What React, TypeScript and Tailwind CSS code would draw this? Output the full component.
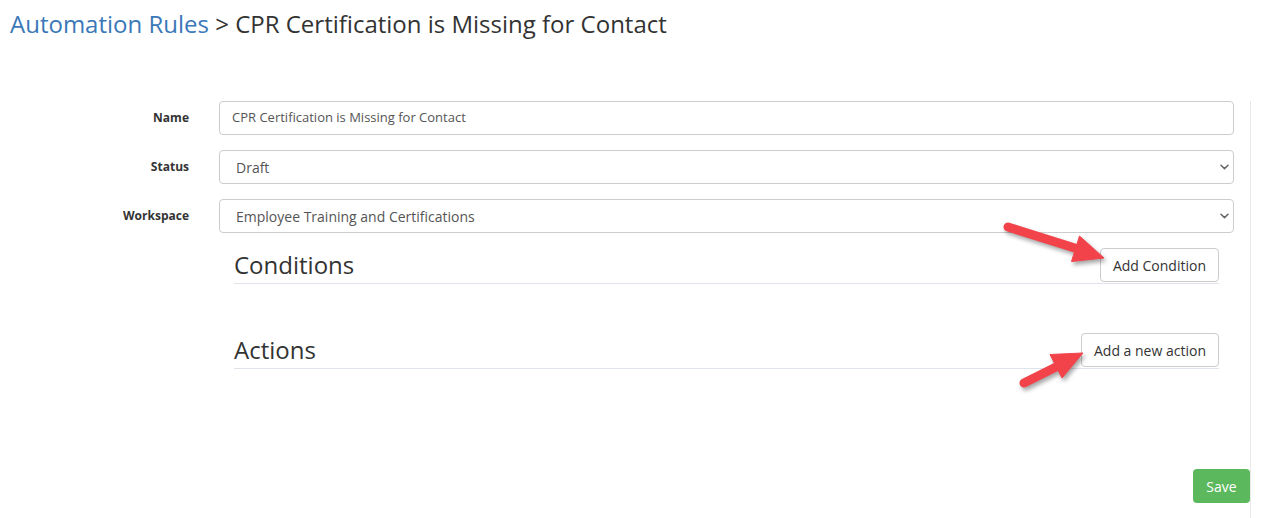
import React from "react";

function Chevron() {
  return (
    <svg width="9" height="6" viewBox="0 0 9 6" className="shrink-0">
      <path d="M1 1.2 L4.5 4.6 L8 1.2" fill="none" stroke="#666" strokeWidth="1.5" strokeLinecap="round" strokeLinejoin="round" />
    </svg>
  );
}

function Row({ label, children }: { label: string; children: React.ReactNode }) {
  return (
    <div className="flex items-center mb-[15px]">
      <div className="w-[219px] pr-[30px] text-right text-[12px] font-bold text-[#333]">{label}</div>
      <div className="w-[1015px]">{children}</div>
    </div>
  );
}

function Select({ value }: { value: string }) {
  return (
    <div className="h-[34px] border border-[#ccc] rounded-[4px] flex items-center justify-between pl-[16px] pr-[4px] text-[14px] text-[#555] bg-white">
      <span>{value}</span>
      <Chevron />
    </div>
  );
}

function Section({ title, button }: { title: string; button: string }) {
  return (
    <div className="ml-[234px] w-[985px] flex items-end justify-between border-b border-[#dfe3ea]">
      <h3 className="text-[24px] leading-[34px] mb-px text-[#333]">{title}</h3>
      <button className="h-[34px] mb-px px-[12px] border border-[#ccc] rounded-[4px] bg-white text-[14px] text-[#333]">
        {button}
      </button>
    </div>
  );
}

export default function App() {
  return (
    <div className="relative w-[1281px] h-[518px] bg-white overflow-hidden" style={{ fontFamily: '"Open Sans", sans-serif' }}>
      <h1 className="pt-[11px] pl-[10px] text-[24px] leading-[26px] text-[#333]">
        <span className="text-[#3a78b8]">Automation Rules</span> &gt; CPR Certification is Missing for Contact
      </h1>
      <div className="mt-[64px] w-[1251px] h-[417px] border-r border-[#e8e8e8] flex flex-col">
        <Row label="Name">
          <div className="h-[34px] border border-[#ccc] rounded-[4px] flex items-center pl-[12px] text-[13px] text-[#555]">
            CPR Certification is Missing for Contact
          </div>
        </Row>
        <Row label="Status">
          <Select value="Draft" />
        </Row>
        <Row label="Workspace">
          <Select value="Employee Training and Certifications" />
        </Row>
        <Section title="Conditions" button="Add Condition" />
        <div className="h-[49px]" />
        <Section title="Actions" button="Add a new action" />
        <div className="flex justify-end mt-[100px]">
          <button className="h-[34px] w-[57px] rounded-[4px] bg-[#5cb85c] text-white text-[14px]">Save</button>
        </div>
      </div>
      <svg className="absolute left-0 top-0 pointer-events-none" width="1281" height="518" style={{ filter: "drop-shadow(2px 3px 2px rgba(0,0,0,0.35))" }}>
        <g fill="#f2434a" stroke="#f2434a">
          <line x1="1008" y1="227" x2="1078" y2="249" strokeWidth="9" strokeLinecap="round" />
          <polygon points="1104,258 1071.5,261.5 1079.5,236" strokeWidth="1" strokeLinejoin="round" />
          <line x1="1024" y1="383" x2="1058" y2="366" strokeWidth="9" strokeLinecap="round" />
          <polygon points="1083,353 1050,354.5 1062,378" strokeWidth="1" strokeLinejoin="round" />
        </g>
      </svg>
    </div>
  );
}
